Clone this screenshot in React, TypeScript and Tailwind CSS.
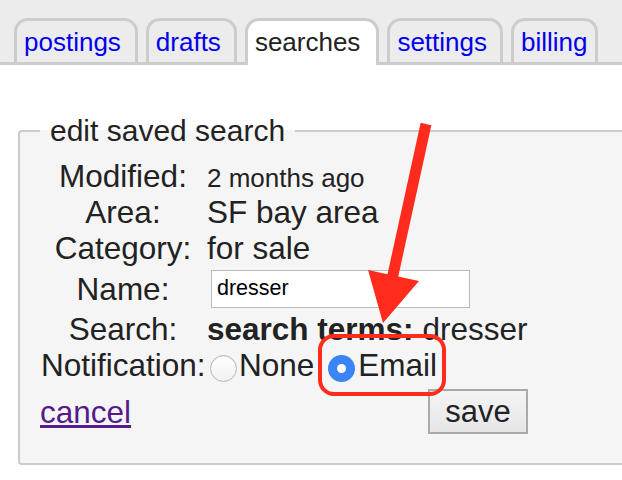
import React from "react";

const tabs = [
  { label: "postings", active: false, cls: "pl-[7px] pr-[14px]" },
  { label: "drafts", active: false, cls: "pl-[7px] pr-[13px]" },
  { label: "searches", active: true, cls: "pl-[7px] pr-[16px]" },
  { label: "settings", active: false, cls: "pl-[7px] pr-[13px]" },
  { label: "billing", active: false, cls: "pl-[7px] pr-[8px]" },
];

function Radio({ checked }: { checked?: boolean }) {
  if (checked) {
    return (
      <span className="inline-flex w-[27px] h-[27px] rounded-full bg-[#3b84f5] items-center justify-center shrink-0">
        <span className="w-[9px] h-[9px] rounded-full bg-white" />
      </span>
    );
  }
  return (
    <span className="inline-block w-[27px] h-[27px] rounded-full border border-[#b5b5b5] bg-gradient-to-b from-[#ffffff] to-[#f0f0f0] shadow-[inset_0_1px_1px_rgba(0,0,0,0.08)] shrink-0" />
  );
}

export default function App() {
  return (
    <div className="relative w-[622px] h-[480px] overflow-hidden bg-white text-[#222] font-['Liberation_Sans',Arial,sans-serif]">
      {/* tab bar */}
      <div className="h-[65px] bg-[#ececec] border-b-[3px] border-[#cccccc] flex items-end pl-[14px] gap-[8px]">
        {tabs.map((t) =>
          t.active ? (
            <div
              key={t.label}
              className={`h-[47px] -mb-[3px] bg-white border-[3px] border-b-0 border-[#cccccc] rounded-t-[14px] pt-[6px] text-[26px] leading-[30px] text-[#222] ${t.cls}`}
            >
              {t.label}
            </div>
          ) : (
            <div
              key={t.label}
              className={`h-[44px] bg-[#ececec] border-[3px] border-b-0 border-[#cccccc] rounded-t-[14px] pt-[6px] text-[26px] leading-[30px] text-[#0000ee] ${t.cls}`}
            >
              {t.label}
            </div>
          )
        )}
      </div>

      <fieldset className="ml-[18px] mt-[49px] w-[640px] border-2 border-[#cccccc] rounded-[4px] bg-[#f5f5f5] pl-[21px] pt-[10px] pb-[29px]">
        <legend className="px-[10px] -ml-[1px] text-[30px] leading-[34px]">edit saved search</legend>

        <div className="text-[31.5px]">
          <div className="flex items-baseline h-[36px] leading-[36px]">
            <span className="w-[164px] text-center">Modified:</span>
            <span className="ml-[2px] text-[26px]">2 months ago</span>
          </div>
          <div className="flex items-baseline h-[36px] leading-[36px]">
            <span className="w-[164px] text-center">Area:</span>
            <span className="ml-[2px]">SF bay area</span>
          </div>
          <div className="flex items-baseline h-[36px] leading-[36px]">
            <span className="w-[164px] text-center">Category:</span>
            <span className="ml-[2px]">for sale</span>
          </div>
          <div className="flex items-center h-[45px] leading-[36px]">
            <span className="w-[164px] text-center">Name:</span>
            <input
              readOnly
              value="dresser"
              className="ml-[6px] h-[38px] w-[259px] border border-[#bbbbbb] bg-white px-[5px] text-[21.5px] text-black outline-none"
            />
          </div>
          <div className="flex items-baseline h-[36px] leading-[36px] whitespace-nowrap">
            <span className="w-[164px] text-center">Search:</span>
            <span className="ml-[2px]">
              <b>search terms:</b> dresser
            </span>
          </div>
          <div className="flex items-center h-[36px] leading-[36px] whitespace-nowrap">
            <span className="w-[164px] text-center">Notification:</span>
            <span className="ml-[5px] mt-[6px] flex">
              <Radio />
            </span>
            <span className="ml-[2px]">None</span>
            <span className="ml-[14px] mt-[6px] flex">
              <Radio checked />
            </span>
            <span className="ml-[3px]">Email</span>
          </div>
          <div className="flex items-center justify-between w-[488px] -ml-[1px] mt-[6px]">
            <a href="#" className="text-[#551a8b] underline leading-[36px]">
              cancel
            </a>
            <button className="w-[100px] h-[45px] border-2 border-[#aaaaaa] bg-gradient-to-b from-[#f4f4f4] to-[#e6e6e6] text-[31px] leading-none text-[#222]">
              save
            </button>
          </div>
        </div>
      </fieldset>

      {/* annotation */}
      <svg className="absolute left-0 top-0 pointer-events-none" width="622" height="480" viewBox="0 0 622 480">
        <line x1="426" y1="124" x2="391" y2="284" stroke="#ff2b1c" strokeWidth="11" />
        <polygon points="368,270 419,281 383,323" fill="#ff2b1c" />
        <rect x="320" y="336" width="124" height="58" rx="14" fill="none" stroke="#ff2b1c" strokeWidth="4" />
      </svg>
    </div>
  );
}
